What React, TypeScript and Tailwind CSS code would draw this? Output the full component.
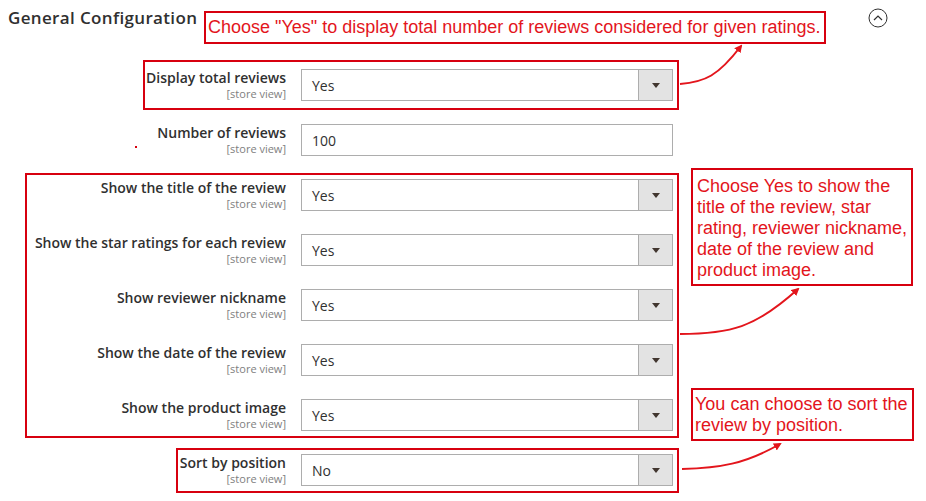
import React from "react";

type Row = { label: string; value: string; select: boolean };

const rows: Row[] = [
  { label: "Display total reviews", value: "Yes", select: true },
  { label: "Number of reviews", value: "100", select: false },
  { label: "Show the title of the review", value: "Yes", select: true },
  { label: "Show the star ratings for each review", value: "Yes", select: true },
  { label: "Show reviewer nickname", value: "Yes", select: true },
  { label: "Show the date of the review", value: "Yes", select: true },
  { label: "Show the product image", value: "Yes", select: true },
  { label: "Sort by position", value: "No", select: true },
];

function Field({ row }: { row: Row }) {
  return (
    <div className="flex items-start gap-[15px] mb-[23px]">
      <div className="w-[286px] shrink-0 text-right">
        <div className="text-[14px] leading-[18px] font-semibold text-[#303030]">{row.label}</div>
        <div className="text-[11px] leading-[14px] text-[#808080]">[store view]</div>
      </div>
      <div className="w-[372px] h-8 flex border border-[#adadad] bg-white">
        <div className="flex-1 flex items-center pl-[10px] text-[14px] text-[#303030]">{row.value}</div>
        {row.select && (
          <div className="w-[34px] flex items-center justify-center bg-[#e3e3e3] border-l border-[#adadad]">
            <div className="w-0 h-0 border-l-[4px] border-r-[4px] border-t-[5px] border-l-transparent border-r-transparent border-t-[#41362f]" />
          </div>
        )}
      </div>
    </div>
  );
}

export default function App() {
  return (
    <div
      className="relative w-[926px] h-[501px] overflow-hidden bg-white"
      style={{ fontFamily: '"Open Sans", "Liberation Sans", sans-serif' }}
    >
      <div className="pt-[6px] pl-[8px]">
        <h2 className="text-[17px] leading-[24px] font-semibold text-[#303030] tracking-[0.35px]">General Configuration</h2>
      </div>
      <div className="mt-[39px]">
        {rows.map((r) => (
          <Field key={r.label} row={r} />
        ))}
      </div>

      {/* collapse toggle */}
      <svg className="absolute left-[868px] top-[8px]" width="20" height="20" viewBox="0 0 20 20">
        <circle cx="10" cy="10" r="9" fill="none" stroke="#303030" strokeWidth="1" />
        <path d="M6 12 L10 8 L14 12" fill="none" stroke="#303030" strokeWidth="1.2" />
      </svg>

      {/* highlight frames drawn over the form */}
      <div className="absolute left-[143px] top-[60px] w-[536px] h-[50px] border-2 border-[#d7000f]" />
      <div className="absolute left-[25px] top-[173px] w-[654px] h-[265px] border-2 border-[#d7000f]" />
      <div className="absolute left-[176px] top-[448px] w-[503px] h-[45px] border-2 border-[#d7000f]" />
      <div className="absolute left-[135px] top-[146px] w-[2px] h-[2px] bg-[#d7000f]" />

      {/* annotations */}
      <div
        className="absolute left-[204px] top-[11px] w-[622px] h-[33px] border-2 border-[#d7000f] pl-[2px] text-[18px] leading-[29px] text-[#e3151c] whitespace-nowrap"
        style={{ fontFamily: '"Liberation Sans", Arial, sans-serif' }}
      >
        Choose "Yes" to display total number of reviews considered for given ratings.
      </div>
      <div
        className="absolute left-[691px] top-[168px] w-[222px] h-[118px] border-2 border-[#d7000f] pl-[4px] pt-[6px] text-[18px] leading-[21px] text-[#e3151c]"
        style={{ fontFamily: '"Liberation Sans", Arial, sans-serif' }}
      >
        Choose Yes to show the title of the review, star rating, reviewer nickname, date of the review and product image.
      </div>
      <div
        className="absolute left-[691px] top-[388px] w-[223px] h-[53px] border-2 border-[#d7000f] pl-[2px] pt-[4px] text-[18px] leading-[21px] text-[#e3151c]"
        style={{ fontFamily: '"Liberation Sans", Arial, sans-serif' }}
      >
        You can choose to sort the review by position.
      </div>

      {/* arrows */}
      <svg className="absolute left-0 top-0 pointer-events-none" width="926" height="501">
        <defs>
          <marker id="ah" markerWidth="8" markerHeight="8" refX="6" refY="4" orient="auto" markerUnits="userSpaceOnUse">
            <path d="M0 0 L8 4 L0 8 Z" fill="#e3151c" />
          </marker>
        </defs>
        <path d="M680 84 C 705 82, 718 76, 741 46" fill="none" stroke="#e3151c" strokeWidth="2" markerEnd="url(#ah)" />
        <path d="M680 334 C 730 334, 755 328, 798 289" fill="none" stroke="#e3151c" strokeWidth="2" markerEnd="url(#ah)" />
        <path d="M682 469 C 720 468, 745 464, 780 444" fill="none" stroke="#e3151c" strokeWidth="2" markerEnd="url(#ah)" />
      </svg>
    </div>
  );
}
